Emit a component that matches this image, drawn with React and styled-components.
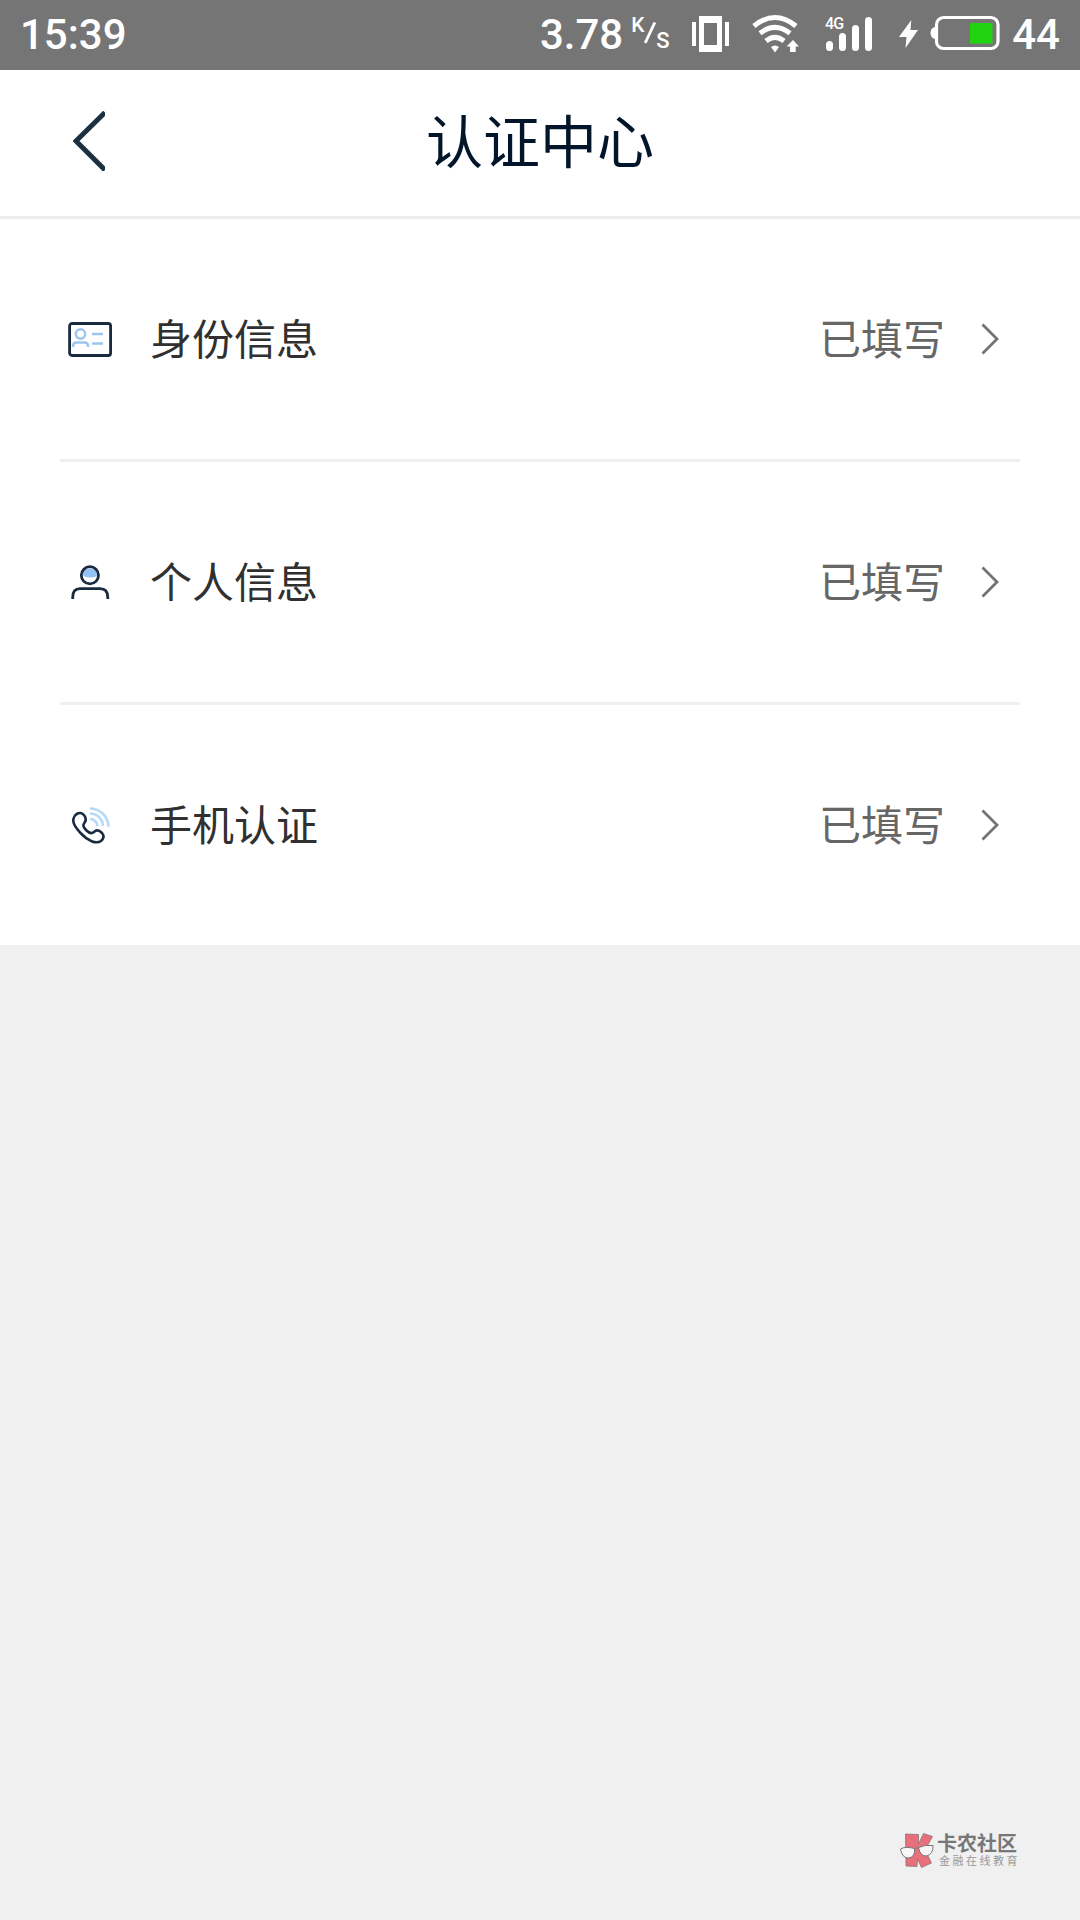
import React from "react";
import styled, { createGlobalStyle } from "styled-components";

const items = [
  { label: "身份信息", status: "已填写", icon: <IdCardIcon /> },
  { label: "个人信息", status: "已填写", icon: <PersonIcon /> },
  { label: "手机认证", status: "已填写", icon: <PhoneIcon /> },
];

function App() {
  return (
    <Page>
      <GlobalStyle />
      <StatusBar />
      <Header>
        <BackButton aria-label="返回">
          <svg width="32" height="60" viewBox="0 0 32 60">
            <path
              d="M32 1.5 L3 30 L32 59"
              fill="none"
              stroke="#1b3040"
              strokeWidth="5"
            />
          </svg>
        </BackButton>
        <Title>认证中心</Title>
      </Header>
      <List>
        {items.map((item) => (
          <Row key={item.label}>
            <RowIcon>{item.icon}</RowIcon>
            <Label>{item.label}</Label>
            <State>{item.status}</State>
            <Arrow width="18" height="32" viewBox="0 0 18 32">
              <path
                d="M1.5 1.5 L16 16 L1.5 30.5"
                fill="none"
                stroke="#737373"
                strokeWidth="2.8"
              />
            </Arrow>
          </Row>
        ))}
      </List>
      <Footer>
        <BrandLogo />
        <BrandText>
          <BrandName>卡农社区</BrandName>
          <BrandSlogan>金融在线教育</BrandSlogan>
        </BrandText>
      </Footer>
    </Page>
  );
}

export default App;

function StatusBar() {
  return (
    <Bar>
      <Time>15:39</Time>
      <Speed>3.78</Speed>
      <Unit>
        <UnitTop>K</UnitTop>
        <Slash width="12" height="22" viewBox="0 0 12 22">
          <path d="M10.8 0.5 L1.2 21" stroke="#fff" strokeWidth="2.8" />
        </Slash>
        <UnitBottom>S</UnitBottom>
      </Unit>
      <VibrateIcon />
      <WifiIcon />
      <SignalIcon />
      <BoltIcon />
      <BatteryIcon />
      <Percent>44</Percent>
    </Bar>
  );
}

function VibrateIcon() {
  return (
    <StatusIcon width="37" height="36" viewBox="0 0 37 36" $left={23}>
      <path d="M0 6h4v24h-4z M33 6h4v24h-4z" fill="#fff" />
      <path
        d="M7 0h23v36h-23z M12 7v22h13v-22z"
        fill="#fff"
        fillRule="evenodd"
      />
    </StatusIcon>
  );
}

function WifiIcon() {
  return (
    <StatusIcon width="47" height="38" viewBox="0 0 47 38" $left={23}>
      <g fill="none" stroke="#fff" strokeWidth="5">
        <path d="M1.9 11 Q23 -6 44 11" />
        <path d="M8 18.3 Q23 6.5 38 18.3" />
        <path d="M14 26 Q23 18.8 32 26" />
      </g>
      <path d="M19 32 Q23 29 27 32 L23 37.5z" fill="#fff" />
      <path d="M41 25 L47 31.5 H43.7 V37 H38 V31.5 H34.5z" fill="#fff" />
    </StatusIcon>
  );
}

function SignalIcon() {
  return (
    <StatusIcon width="48" height="40" viewBox="0 -2 48 40" $left={26}>
      <NetText x="0" y="12.5">
        4G
      </NetText>
      <g fill="#fff">
        <rect x="1" y="25" width="7" height="10" rx="3.5" />
        <rect x="14" y="17" width="7" height="18" rx="3.5" />
        <rect x="27" y="9" width="7" height="26" rx="3.5" />
        <rect x="40" y="1" width="7" height="34" rx="3.5" />
      </g>
    </StatusIcon>
  );
}

function BoltIcon() {
  return (
    <StatusIcon width="19" height="28" viewBox="0 0 19 28" $left={26}>
      <path d="M12.3 0 L0 17 H7.5 L6.5 28 L19 10 H11.5z" fill="#fff" />
    </StatusIcon>
  );
}

function BatteryIcon() {
  return (
    <StatusIcon width="70" height="36" viewBox="0 0 70 36" $left={12}>
      <rect
        x="6.5"
        y="1.5"
        width="61.5"
        height="31"
        rx="7"
        fill="none"
        stroke="#fff"
        strokeWidth="3.2"
      />
      <path d="M5 11 Q0.5 12 0.5 17 Q0.5 22 5 23z" fill="#fff" />
      <rect x="40" y="7" width="22.5" height="20.5" fill="#20d510" />
    </StatusIcon>
  );
}

function IdCardIcon() {
  return (
    <svg width="44" height="36" viewBox="0 0 44 36" fill="none">
      <rect
        x="1.6"
        y="1.5"
        width="41"
        height="32"
        rx="2.5"
        stroke="#1a2a3f"
        strokeWidth="2.8"
      />
      <g stroke="#9dc5ef" strokeWidth="2.5">
        <circle cx="12.5" cy="12" r="4.7" />
        <path d="M5 25 V24 Q5 20.5 8.5 20.5 H16.5 Q20 20.5 20 24 V25" />
        <path d="M24 12 H35 M24 21.5 H35" />
      </g>
    </svg>
  );
}

function PersonIcon() {
  return (
    <svg width="44" height="36" viewBox="0 0 44 36" fill="none">
      <path
        d="M14 9.5 A8 8 0 0 1 29.5 9.5 Q27.5 13 23 12.5 Q17.5 13 14 9.5z"
        fill="#93c3f5"
      />
      <circle cx="21.9" cy="10.3" r="8.6" stroke="#1a2a3f" strokeWidth="2.8" />
      <path
        d="M4.7 34 V32.5 Q4.7 23.7 12 23.7 H32 Q39.8 23.7 39.8 32.5 V34"
        stroke="#1a2a3f"
        strokeWidth="2.8"
      />
    </svg>
  );
}

function PhoneIcon() {
  return (
    <svg width="44" height="40" viewBox="0 -1 44 40" fill="none">
      <path
        d="M7.5 8 C10.5 5 14 5.5 16.3 8.5 C18.5 11.5 18.5 13.5 16 16.5 C14.5 18.5 16 21 18.5 23.5 C21.5 26.5 23.5 27 26 25 C28.5 22.5 31 23 34 26 C36.5 29 36 31.5 33 34 C28 37.5 19.5 33.5 13 26.5 C5.5 18.5 3 13 7.5 8z"
        stroke="#1a2a3f"
        strokeWidth="2.6"
      />
      <g stroke="#b5d9f7" strokeWidth="2.5">
        <path d="M22 1.5 A18.5 18.5 0 0 1 40.5 19.5" />
        <path d="M22 6.5 A13 13 0 0 1 35 19" />
        <path d="M22 12 A7.5 7.5 0 0 1 29.5 19" />
      </g>
    </svg>
  );
}

function BrandLogo() {
  return (
    <svg width="34" height="36" viewBox="0 0 34 36">
      <path
        d="M5.5 1 L18.5 1.5 L18.5 11 L23.5 0.5 L32.5 3.5 L25 17 L31.5 30 L21.5 34.5 L17.5 26 L17 33.5 L6 33z"
        fill="#e8707c"
        stroke="#8a7375"
        strokeWidth="0.8"
      />
      <g fill="#f7f5f5" stroke="#777" strokeWidth="1">
        <path d="M0.5 16 Q5 13 14.5 15.5 Q15.5 24 8.5 25 Q2 25 0.5 16z" />
        <path d="M18.5 14.5 Q25 11.5 33 12.5 Q33.5 21 26.5 23 Q20 23 18.5 14.5z" />
      </g>
      <path d="M14.5 16 Q16.5 14 18.5 15" fill="none" stroke="#777" />
    </svg>
  );
}

const GlobalStyle = createGlobalStyle`
  * {
    box-sizing: border-box;
  }

  body {
    margin: 0;
    background: #f0f0f0;
    font-family: Roboto, "Noto Sans CJK SC", sans-serif;
  }

  svg {
    display: block;
    flex-shrink: 0;
  }
`;

const Page = styled.div`
  display: flex;
  flex-direction: column;
  width: 1080px;
  height: 1920px;
  background: #f0f0f0;
`;

const Bar = styled.div`
  display: flex;
  align-items: center;
  height: 70px;
  padding: 0 20px 3px;
  background: #757575;
  color: #fff;
  font-size: 42px;
  font-weight: 500;
  line-height: 66px;
`;

const Time = styled.span`
  flex: 1;
  padding-top: 2px;
`;

const Speed = styled.span`
  margin-right: 8px;
  padding-top: 2px;
`;

const Unit = styled.span`
  display: flex;
  height: 33px;
  font-size: 21px;
  line-height: 17px;
`;

const UnitTop = styled.span`
  width: 13px;
`;

const Slash = styled.svg`
  margin-top: 5px;
`;

const UnitBottom = styled.span`
  align-self: flex-end;
  width: 13px;
  margin-bottom: 1px;
  font-size: 22px;
`;

const StatusIcon = styled.svg`
  margin-left: ${(props) => props.$left}px;
  overflow: visible;
`;

const NetText = styled.text`
  fill: #fff;
  font-size: 16px;
  font-weight: 500;
  letter-spacing: -0.8px;
`;

const Percent = styled.span`
  margin-left: 12px;
  padding-top: 2px;
`;

const Header = styled.header`
  display: grid;
  grid-template-columns: 180px 1fr 180px;
  align-items: center;
  height: 149px;
  border-bottom: 3px solid #ededed;
  background: #fff;
`;

const BackButton = styled.button`
  margin: 0 0 4px;
  padding: 0 0 0 73px;
  border: 0;
  background: none;
`;

const Title = styled.h1`
  margin: 1px 0 0;
  color: #02152a;
  font-size: 57px;
  font-weight: 400;
  line-height: 80px;
  text-align: center;
`;

const List = styled.ul`
  margin: 0;
  padding: 0 60px;
  background: #fff;
  list-style: none;
`;

const Row = styled.li`
  display: flex;
  align-items: center;
  height: 243px;
  padding: 0 21px 0 8px;
  border-bottom: 3px solid #efefef;

  &:last-child {
    height: 240px;
    border-bottom: 0;
  }
`;

const RowIcon = styled.span`
  width: 44px;
  padding-top: 2px;
`;

const Label = styled.span`
  flex: 1;
  margin-left: 38px;
  padding-top: 3px;
  color: #303030;
  font-size: 42px;
  line-height: 60px;
`;

const State = styled.span`
  padding-top: 3px;
  color: #666;
  font-size: 42px;
  line-height: 60px;
`;

const Arrow = styled.svg`
  margin-left: 36px;
`;

const Footer = styled.footer`
  display: flex;
  margin: auto 60px 51px auto;
`;

const BrandText = styled.div`
  width: 83px;
  margin-left: 3px;
`;

const BrandName = styled.div`
  color: #777;
  font-size: 20px;
  font-weight: 700;
  line-height: 22px;
  white-space: nowrap;
`;

const BrandSlogan = styled.div`
  margin-left: 2px;
  color: #999;
  font-size: 11px;
  letter-spacing: 2.5px;
  line-height: 13px;
  white-space: nowrap;
`;
